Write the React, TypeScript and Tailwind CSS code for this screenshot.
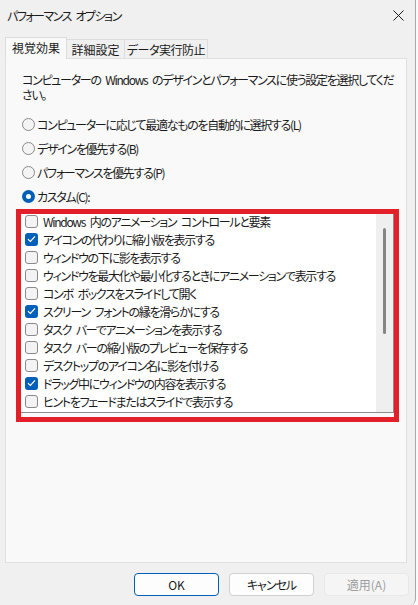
import React from "react";

const font = {
  fontFamily: '"Noto Sans CJK JP", "Noto Sans", sans-serif',
};

const sp = (s: string) => s.replace(/ /g, "\u2002");

function Radio({ checked, label }: { checked?: boolean; label: string }) {
  return (
    <div className="flex items-center h-[24px]">
      {checked ? (
        <div className="w-[13px] h-[13px] rounded-full bg-[#005fb8] flex items-center justify-center shrink-0">
          <div className="w-[5px] h-[5px] rounded-full bg-white" />
        </div>
      ) : (
        <div className="w-[13px] h-[13px] rounded-full border border-[#8a8a8a] bg-[#f4f4f4] shrink-0" />
      )}
      <span className="ml-[2px] text-[12px] leading-[15px] text-[#1a1a1a] whitespace-nowrap">{label}</span>
    </div>
  );
}

function Check({ checked, label }: { checked?: boolean; label: string }) {
  return (
    <div className="flex items-center h-[18px] whitespace-nowrap shrink-0">
      {checked ? (
        <div className="w-[13px] h-[13px] rounded-[3px] bg-[#005fb8] flex items-center justify-center shrink-0">
          <svg width="9" height="8" viewBox="0 0 9 8">
            <path d="M1 4.2 L3.4 6.4 L8 1.4" fill="none" stroke="white" strokeWidth="1.2" />
          </svg>
        </div>
      ) : (
        <div className="w-[13px] h-[13px] rounded-[3px] border border-[#8a8a8a] bg-[#f3f3f3] shrink-0" />
      )}
      <span className="ml-[5px] text-[12px] leading-[15px] text-[#1a1a1a]">{sp(label)}</span>
    </div>
  );
}

const items: [string, boolean][] = [
  ["Windows 内のアニメーション コントロールと要素", false],
  ["アイコンの代わりに縮小版を表示する", true],
  ["ウィンドウの下に影を表示する", false],
  ["ウィンドウを最大化や最小化するときにアニメーションで表示する", false],
  ["コンボ ボックスをスライドして開く", false],
  ["スクリーン フォントの縁を滑らかにする", true],
  ["タスク バーでアニメーションを表示する", false],
  ["タスク バーの縮小版のプレビューを保存する", false],
  ["デスクトップのアイコン名に影を付ける", false],
  ["ドラッグ中にウィンドウの内容を表示する", true],
  ["ヒントをフェードまたはスライドで表示する", false],
  ["マウス ポインターの下に影を表示する", false],
];

export default function App() {
  return (
    <div
      className="w-[418px] h-[605px] bg-[#fafafa] flex overflow-hidden [font-feature-settings:'palt'] tracking-[-1.3px]"
      style={font}
    >
      <div className="w-[416px] h-[605px] bg-[#f0f0f0] border-r border-[#a8a8a8] flex flex-col rounded-br-[6px]">
        {/* title bar */}
        <div className="h-[30px] flex items-center justify-between pl-[7px] pr-[11px]">
          <span className="text-[12px] leading-[15px] text-[#1a1a1a] tracking-[-1.5px]">{sp("パフォーマンス オプション")}</span>
          <svg width="11" height="11" viewBox="0 0 11 11">
            <path d="M0.5 0.5 L10.5 10.5 M10.5 0.5 L0.5 10.5" stroke="#1a1a1a" strokeWidth="1" />
          </svg>
        </div>
        {/* tabs */}
        <div className="mt-[7px] ml-[5px] h-[22px] -mb-px flex items-end tracking-normal">
          <div className="relative z-10 w-[62px] h-[22px] bg-[#f9f9f9] border-l border-t border-r border-[#dcdcdc] flex items-center justify-center text-[12px] text-[#1a1a1a] leading-[15px] pb-[2px]">
            視覚効果
          </div>
          <div className="w-[58px] h-[20px] border-t border-r border-[#dcdcdc] flex items-center justify-center text-[12px] text-[#1a1a1a] leading-[15px]">
            詳細設定
          </div>
          <div className="w-[83px] h-[20px] border-t border-r border-[#dcdcdc] flex items-center justify-center text-[12px] text-[#1a1a1a] leading-[15px] tracking-[-0.5px]">
            データ実行防止
          </div>
        </div>
        {/* panel */}
        <div className="ml-[5px] w-[402px] h-[505px] bg-[#f9f9f9] border border-[#e0e0e0] pt-[13px] pl-[16px] flex flex-col">
          <p className="text-[12px] leading-[15px] text-[#1a1a1a] whitespace-nowrap">
            {sp("コンピューターの Windows のデザインとパフォーマンスに使う設定を選択してくだ")}
            <br />
            さい。
          </p>
          <div className="mt-[10px] flex flex-col">
            <Radio label="コンピューターに応じて最適なものを自動的に選択する(L)" />
            <Radio label="デザインを優先する(B)" />
            <Radio label="パフォーマンスを優先する(P)" />
            <Radio checked label="カスタム(C):" />
          </div>
          <div className="mt-[1px] -ml-[6px] w-[383px] h-[213px] border-[5px] border-[#e3202a]">
            <div className="w-full h-[199px] bg-white border-r border-b border-[#8c8c8c] flex overflow-hidden">
              <div className="flex-1 pl-[4px] -mt-[2px] flex flex-col overflow-hidden">
                {items.map(([label, c]) => (
                  <Check key={label} label={label} checked={c} />
                ))}
              </div>
              <div className="w-[17px] h-full bg-[#efefef] flex justify-center">
                <div className="mt-[14px] w-[3px] h-[106px] rounded-full bg-[#868686]" />
              </div>
            </div>
          </div>
        </div>
        {/* buttons */}
        <div className="mt-[10px] flex pl-[134px] gap-[10px] tracking-normal">
          <button className="w-[85px] h-[23px] rounded-[4px] bg-[#fdfdfd] border border-[#005fb8] text-[12px] text-[#1a1a1a] leading-[15px]">
            OK
          </button>
          <button className="w-[85px] h-[23px] rounded-[4px] bg-[#fdfdfd] border border-[#d0d0d0] text-[12px] text-[#1a1a1a] leading-[15px] tracking-[-1px]">
            キャンセル
          </button>
          <button className="w-[85px] h-[23px] rounded-[4px] bg-[#f5f5f5] border border-[#e8e8e8] text-[12px] text-[#9d9d9d] leading-[15px]">
            適用(A)
          </button>
        </div>
      </div>
    </div>
  );
}
